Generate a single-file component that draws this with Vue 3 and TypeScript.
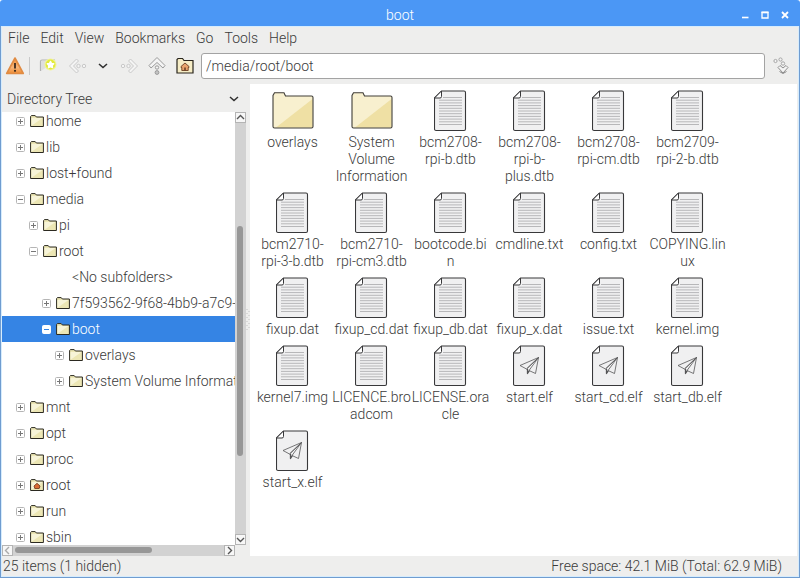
<script setup lang="ts">
import { onMounted, ref } from 'vue'

type Expander = 'plus' | 'minus' | 'none'

interface TreeNode {
  name: string
  level: number
  expander: Expander
  home?: boolean
  selected?: boolean
}

interface FileItem {
  label: string
  kind: 'folder' | 'text' | 'binary'
}

const menus: string[] = ['File', 'Edit', 'View', 'Bookmarks', 'Go', 'Tools', 'Help']

const path = ref<string>('/media/root/boot')

const nodes: TreeNode[] = [
  { name: 'home', level: 0, expander: 'plus' },
  { name: 'lib', level: 0, expander: 'plus' },
  { name: 'lost+found', level: 0, expander: 'plus' },
  { name: 'media', level: 0, expander: 'minus' },
  { name: 'pi', level: 1, expander: 'plus' },
  { name: 'root', level: 1, expander: 'minus' },
  { name: '<No subfolders>', level: 2, expander: 'none' },
  { name: '7f593562-9f68-4bb9-a7c9-', level: 2, expander: 'plus' },
  { name: 'boot', level: 2, expander: 'minus', selected: true },
  { name: 'overlays', level: 3, expander: 'plus' },
  { name: 'System Volume Information', level: 3, expander: 'plus' },
  { name: 'mnt', level: 0, expander: 'plus' },
  { name: 'opt', level: 0, expander: 'plus' },
  { name: 'proc', level: 0, expander: 'plus' },
  { name: 'root', level: 0, expander: 'plus', home: true },
  { name: 'run', level: 0, expander: 'plus' },
  { name: 'sbin', level: 0, expander: 'plus' },
]

const files: FileItem[] = [
  { label: 'overlays', kind: 'folder' },
  { label: 'System\nVolume\nInformation', kind: 'folder' },
  { label: 'bcm2708-\nrpi-b.dtb', kind: 'text' },
  { label: 'bcm2708-\nrpi-b-\nplus.dtb', kind: 'text' },
  { label: 'bcm2708-\nrpi-cm.dtb', kind: 'text' },
  { label: 'bcm2709-\nrpi-2-b.dtb', kind: 'text' },
  { label: 'bcm2710-\nrpi-3-b.dtb', kind: 'text' },
  { label: 'bcm2710-\nrpi-cm3.dtb', kind: 'text' },
  { label: 'bootcode.bi\nn', kind: 'text' },
  { label: 'cmdline.txt', kind: 'text' },
  { label: 'config.txt', kind: 'text' },
  { label: 'COPYING.lin\nux', kind: 'text' },
  { label: 'fixup.dat', kind: 'text' },
  { label: 'fixup_cd.dat', kind: 'text' },
  { label: 'fixup_db.dat', kind: 'text' },
  { label: 'fixup_x.dat', kind: 'text' },
  { label: 'issue.txt', kind: 'text' },
  { label: 'kernel.img', kind: 'text' },
  { label: 'kernel7.img', kind: 'text' },
  { label: 'LICENCE.bro\nadcom', kind: 'text' },
  { label: 'LICENSE.ora\ncle', kind: 'text' },
  { label: 'start.elf', kind: 'binary' },
  { label: 'start_cd.elf', kind: 'binary' },
  { label: 'start_db.elf', kind: 'binary' },
  { label: 'start_x.elf', kind: 'binary' },
]

const textLines: number[] = Array.from({ length: 11 }, (_, i) => 7.5 + i * 2.7)

const treeView = ref<HTMLElement | null>(null)

onMounted(() => {
  if (treeView.value) treeView.value.scrollTop = 4
})
</script>

<template>
  <div class="window">
    <header class="titlebar">
      <h1 class="title">boot</h1>
      <div class="controls">
        <button type="button" aria-label="Minimise">
          <svg width="10" height="10" viewBox="0 0 10 10"><path d="M2 7.500h6.500" stroke="#fff" stroke-width="1.600" /></svg>
        </button>
        <button type="button" aria-label="Maximise">
          <svg width="10" height="10" viewBox="0 0 10 10"><path d="M2 2.500h6v5.500h-6z" stroke="#fff" stroke-width="1.300" fill="none" /><path d="M1.500 2.300h7" stroke="#fff" stroke-width="1.600" /></svg>
        </button>
        <button type="button" aria-label="Close">
          <svg width="10" height="10" viewBox="0 0 10 10"><path d="M2 2l6 6M8 2l-6 6" stroke="#fff" stroke-width="1.800" /></svg>
        </button>
      </div>
    </header>

    <div class="frame">
      <nav class="menubar">
        <button v-for="m in menus" :key="m" type="button">{{ m }}</button>
      </nav>

      <div class="toolbar">
        <button type="button" class="warn" aria-label="Running as root">
          <svg width="20" height="20" viewBox="0 0 20 20">
            <defs>
              <linearGradient id="warnFill" x1="0" y1="0" x2="0" y2="1">
                <stop offset="0" stop-color="#f08f38" />
                <stop offset=".6" stop-color="#f7b477" />
                <stop offset="1" stop-color="#ee8c35" />
              </linearGradient>
            </defs>
            <path d="M10 2L18.300 17.500H1.700z" fill="url(#warnFill)" stroke="#e08b43" stroke-width="1.600" stroke-linejoin="round" />
            <path d="M10 7v5.500" stroke="#3b2a1c" stroke-width="1.800" />
            <circle cx="10" cy="14.800" r="1.100" fill="#3b2a1c" />
          </svg>
        </button>
        <span class="divider"></span>
        <button type="button" class="newtab" aria-label="New tab">
          <svg width="20" height="20" viewBox="0 0 20 20">
            <path d="M1.500 15V5.500q0-1.500 1.500-1.500h13" fill="none" stroke="#b4b4b4" stroke-width="1.200" />
            <path d="M2 15V6q0-1 1-1h8v5q-4 1-9 5z" fill="#dedede" />
            <circle cx="11.500" cy="8.500" r="6" fill="#f1f39a" />
            <circle cx="11.500" cy="8.500" r="4.900" fill="#e2ea3c" />
            <path d="M11.500 5.500l1 2 2.200.3-1.600 1.600.4 2.200-2-1-2 1 .4-2.200-1.600-1.600 2.200-.3z" fill="#fff" stroke="#fff" stroke-width="1.500" stroke-linejoin="round" />
          </svg>
        </button>
        <button type="button" aria-label="Back" class="back">
          <svg width="20" height="20" viewBox="0 0 20 20" fill="#f4f4f4" stroke="#c9c9c9">
            <path d="M8.500 3L1.500 10l7 7 2-2L5.500 10l5-5z" />
            <circle cx="10.500" cy="10" r="1.700" /><circle cx="16" cy="10" r="1.700" />
          </svg>
        </button>
        <button type="button" aria-label="History" class="history">
          <svg width="10" height="8" viewBox="0 0 10 8"><path d="M1 2l4 3.500L9 2" fill="none" stroke="#303030" stroke-width="1.600" /></svg>
        </button>
        <button type="button" aria-label="Forward" class="forward">
          <svg width="20" height="20" viewBox="0 0 20 20" fill="#f4f4f4" stroke="#c9c9c9">
            <path d="M11.500 3l7 7-7 7-2-2 5-5-5-5z" />
            <circle cx="9.500" cy="10" r="1.700" /><circle cx="4" cy="10" r="1.700" />
          </svg>
        </button>
        <button type="button" aria-label="Up" class="up">
          <svg width="20" height="20" viewBox="0 0 20 20" fill="#f4f4f4" stroke="#9a9a9a">
            <path d="M10 1.500L2 9.500l2 2.500 6-5.500 6 5.500 2-2.500z" />
            <circle cx="10" cy="11.500" r="1.700" /><circle cx="10" cy="16.500" r="1.900" fill="#c4c4c4" />
          </svg>
        </button>
        <button type="button" aria-label="Home folder" class="home">
          <svg width="18" height="18" viewBox="0 0 18 18">
            <path d="M1 16V2.500l1-1h4.500l1.500 2h9V16z" fill="#f6edc6" stroke="#29251d" stroke-width="1.200" />
            <path d="M5 9.500L9 6l4 3.500V10.500h-.8v3H5.800v-3H5z" fill="#e9a36c" stroke="#6b4023" stroke-width=".9" />
            <path d="M9 10.500v3" stroke="#6b4023" stroke-width="1.600" />
          </svg>
        </button>
        <input v-model="path" class="path" type="text" aria-label="Location" />
        <button type="button" aria-label="Go to location" class="jump">
          <svg width="20" height="20" viewBox="0 0 20 20" fill="#f4f4f4" stroke="#a6a6a6">
            <circle cx="4.500" cy="5" r="1.600" /><circle cx="9.500" cy="3.500" r="1.600" />
            <path d="M7 11.500l2-2 3 2.500 3-2.500 2 2-5 5.500z" stroke="#8e8e8e" />
            <path d="M8.500 15.500l3.500 2 3.500-2" fill="none" stroke="#8a8a8a" />
            <circle cx="12" cy="7.500" r="1.700" />
          </svg>
        </button>
      </div>

      <div class="body">
        <aside class="sidebar">
          <div class="side-head">
            <h2>Directory Tree</h2>
            <button type="button" aria-label="Choose side pane">
              <svg width="10" height="8" viewBox="0 0 10 8"><path d="M1 2l4 3.500L9 2" fill="none" stroke="#303030" stroke-width="1.500" /></svg>
            </button>
          </div>
          <div class="tree-area">
            <div ref="treeView" class="tree">
              <ul>
                <li
                  v-for="(n, i) in nodes"
                  :key="i"
                  :class="{ selected: n.selected }"
                  :style="{ paddingLeft: 14 + n.level * 13 + 'px' }"
                >
                  <svg class="expander" width="9" height="9" viewBox="0 0 9 9">
                    <template v-if="n.expander !== 'none'">
                      <rect x=".5" y=".5" width="8" height="8" rx="1" fill="#fff" :stroke="n.selected ? '#fff' : '#b5b5b5'" />
                      <path d="M2 4.500h5" :stroke="n.selected ? '#3584e4' : '#777'" />
                      <path v-if="n.expander === 'plus'" d="M4.500 2v5" stroke="#777" />
                    </template>
                  </svg>
                  <svg class="mini" width="14" height="13" viewBox="0 0 14 13">
                    <template v-if="n.expander !== 'none'">
                      <path d="M.6 11.500V1.500l.8-.9h3.800l1.200 1.400h7v9.500z" fill="#ece6b4" stroke="#2b2920" stroke-width="1" />
                      <path d="M1.500 10.800V3h11z" fill="#f7f4d8" />
                      <path v-if="n.home" d="M4 7L7 4.300 10 7 9.200 9.500h-4.400z" fill="#d96a33" stroke="#6a3118" stroke-width=".8" />
                    </template>
                  </svg>
                  <span>{{ n.name }}</span>
                </li>
              </ul>
            </div>
            <div class="vbar">
              <button type="button" aria-label="Scroll up">
                <svg width="9" height="9" viewBox="0 0 9 9"><path d="M1 6l3.500-3.500L8 6" /></svg>
              </button>
              <div class="track"><div class="thumb"></div></div>
              <button type="button" aria-label="Scroll down">
                <svg width="9" height="9" viewBox="0 0 9 9"><path d="M1 3l3.500 3.500L8 3" /></svg>
              </button>
            </div>
            <div class="hbar">
              <button type="button" class="dim" aria-label="Scroll left">
                <svg width="9" height="9" viewBox="0 0 9 9"><path d="M6 1L2.500 4.500 6 8" /></svg>
              </button>
              <div class="track"><div class="thumb"></div></div>
              <button type="button" aria-label="Scroll right">
                <svg width="9" height="9" viewBox="0 0 9 9"><path d="M3 1l3.500 3.500L3 8" /></svg>
              </button>
            </div>
          </div>
        </aside>
        <div class="splitter">
          <svg width="4" height="24" viewBox="0 0 4 24">
            <path d="M1 1v22M3 3v20" stroke="#c2c2c2" stroke-dasharray="1 3" />
          </svg>
        </div>

        <main class="files">
          <figure v-for="f in files" :key="f.label">
            <svg v-if="f.kind === 'folder'" width="44" height="42" viewBox="0 0 44 42">
              <path d="M2 36.500V5.500l1.500-2.800h9.500l1.500 3.300h26q1.500 0 1.500 1.500v29q0 1.500-1.500 1.500h-37q-1.500 0-1.500-1.500z" fill="#f8f0cf" />
              <path d="M5 37.500L41.500 9v27.500q0 1-1 1z" fill="#efe0a4" />
              <path d="M2 36.500V5.500l1.500-2.800h9.500l1.500 3.300h26q1.500 0 1.500 1.500v29q0 1.500-1.500 1.500h-37q-1.500 0-1.500-1.500z" fill="none" stroke="#403e38" stroke-width="1.100" />
            </svg>
            <svg v-else width="34" height="42" viewBox="1 0 34 42">
              <path d="M1.500 8L8.500 1H31q1.500 0 1.500 1.500v36.500q0 1.500-1.500 1.500H3q-1.500 0-1.500-1.500z" fill="#f0f0f1" stroke="#38383a" stroke-width="1.100" />
              <path d="M1.500 8L8.500 1v5.500q0 1.500-1.500 1.500z" fill="#fff" stroke="#38383a" stroke-width="1" />
              <g v-if="f.kind === 'text'" stroke="#b0b0b2" stroke-width=".9">
                <path v-for="y in textLines" :key="y" :d="`M${y < 9 ? 10 : 6} ${y}H29`" />
              </g>
              <g v-else fill="none" stroke="#555557" stroke-width=".8" stroke-linejoin="round">
                <path d="M26.500 12.500L8 20.500l6.500 3.500zM26.500 12.500L14.500 24M26.500 12.500L17 25.500l6.500 3z" />
                <path d="M15.500 24v4.500l2-3" stroke-width="1.300" />
              </g>
            </svg>
            <figcaption>{{ f.label }}</figcaption>
          </figure>
        </main>
      </div>

      <footer class="status">
        <span>25 items (1 hidden)</span>
        <span>Free space: 42.1 MiB (Total: 62.9 MiB)</span>
      </footer>
    </div>
  </div>
</template>

<style>
body {
  margin: 0;
  background: #fff;
}
</style>

<style scoped>
.window {
  display: flex;
  flex-direction: column;
  height: 100vh;
  font-family: Roboto, "Liberation Sans", sans-serif;
  font-size: 14px;
  font-weight: 300;
  color: #3a3a3a;
}

button {
  display: flex;
  align-items: center;
  justify-content: center;
  margin: 0;
  padding: 0;
  border: 0;
  background: none;
  font: inherit;
  color: inherit;
}

.titlebar {
  display: grid;
  grid-template-columns: 1fr auto 1fr;
  align-items: center;
  height: 26px;
  flex: none;
  padding: 3px 10px 0 10px;
  box-sizing: border-box;
  border-radius: 3px 3px 0 0;
  background: #4b97f5;
  color: #fff;
}

.title {
  grid-column: 2;
  margin: 0;
  font-size: 14px;
  font-weight: 300;
}

.controls {
  display: flex;
  justify-content: flex-end;
  gap: 10px;
}

.frame {
  display: flex;
  flex-direction: column;
  flex: 1;
  min-height: 0;
  border: 1px solid #6f9cd0;
  border-top: 0;
  box-shadow: inset 0 0 0 1px #d6ecfd;
  padding: 0 2px 1px 1px;
  background: #eeeeed;
}

.menubar {
  display: flex;
  gap: 11px;
  height: 24px;
  padding: 0 6px;
  flex: none;
}

.toolbar {
  display: flex;
  align-items: center;
  height: 34px;
  padding: 0 6px 2px 3px;
  flex: none;
  box-sizing: border-box;
}

.divider {
  width: 1px;
  height: 18px;
  margin: 0 9px 0 4px;
  background: #c9c9c9;
}

.history {
  margin: 0 11px 0 10px;
}

.newtab,
.up {
  margin-right: 9px;
}

.forward {
  margin-right: 8px;
}

.home {
  margin-right: 7px;
}

.path {
  flex: 1;
  min-width: 0;
  height: 26px;
  padding: 0 4px;
  box-sizing: border-box;
  border: 1px solid #a3a3a3;
  border-radius: 3px;
  background: #fff;
  font: inherit;
  color: inherit;
}

.jump {
  margin-left: 6px;
}

.body {
  display: flex;
  flex: 1;
  min-height: 0;
}

.sidebar {
  display: flex;
  flex-direction: column;
  flex: 0 0 244px;
  min-width: 0;
}

.side-head {
  display: flex;
  align-items: center;
  justify-content: space-between;
  height: 28px;
  padding: 2px 7px 0 5px;
  flex: none;
  box-sizing: border-box;
}

.side-head h2 {
  margin: 0;
  font-size: 14px;
  font-weight: 300;
}

.tree-area {
  display: grid;
  grid-template-columns: 1fr 11px;
  grid-template-rows: 1fr 11px;
  flex: 1;
  min-height: 0;
}

.tree {
  overflow: hidden;
  background: #fff;
  min-width: 0;
}

.tree ul {
  margin: 0;
  padding: 0;
  list-style: none;
}

.tree li {
  display: flex;
  align-items: center;
  height: 26px;
  white-space: nowrap;
}

.tree li.selected {
  background: #3584e4;
  color: #fff;
}

.expander {
  flex: none;
  margin-right: 5px;
}

.mini {
  flex: none;
  margin-right: 2px;
}

.vbar,
.hbar {
  display: flex;
  background: #d2d2d2;
}

.vbar {
  flex-direction: column;
}

.vbar button,
.hbar button {
  width: 11px;
  height: 11px;
  flex: none;
  box-sizing: border-box;
  border: 1px solid #b4b4b4;
  background: #f7f7f7;
}

.vbar path,
.hbar path {
  fill: none;
  stroke: #555;
  stroke-width: 1.4;
}

.hbar .dim path {
  stroke: #aaa;
}

.track {
  flex: 1;
  position: relative;
}

.thumb {
  position: absolute;
  border-radius: 3px;
  background: #979797;
}

.vbar .thumb {
  top: 25%;
  bottom: 19%;
  left: 2px;
  right: 3px;
}

.hbar .thumb {
  left: 1%;
  right: 34%;
  top: 2px;
  bottom: 3px;
}

.splitter {
  display: flex;
  align-items: center;
  flex: 0 0 4px;
}

.files {
  display: grid;
  grid-template-columns: repeat(auto-fill, 79px);
  align-content: start;
  flex: 1;
  min-width: 0;
  padding: 6px 0 0 3px;
  background: #fff;
  overflow: hidden;
}

.files figure {
  display: flex;
  flex-direction: column;
  align-items: center;
  margin: 0;
  padding-bottom: 7px;
}

.files figcaption {
  margin-top: 2px;
  line-height: 17px;
  text-align: center;
  white-space: pre;
}

.status {
  display: flex;
  align-items: center;
  justify-content: space-between;
  height: 20px;
  flex: none;
  padding: 0 15px 0 1px;
}
</style>
